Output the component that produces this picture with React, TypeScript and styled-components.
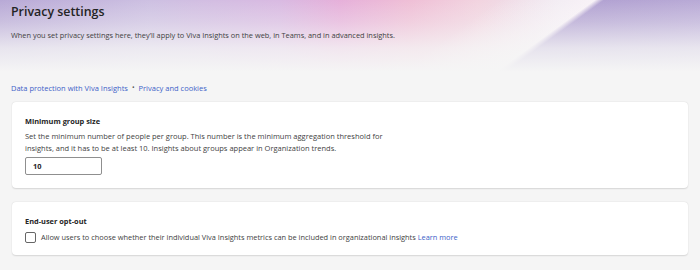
import React from "react";
import styled, { createGlobalStyle } from "styled-components";

const GlobalStyle = createGlobalStyle`
  html, body {
    margin: 0;
    padding: 0;
    background: #f5f5f5;
  }
  body {
    font-family: "Open Sans", "Noto Sans", Arial, sans-serif;
    color: #242424;
    -webkit-font-smoothing: antialiased;
  }
  * { box-sizing: border-box; }
`;

const Page = styled.div`
  width: 700px;
  height: 270px;
  overflow: hidden;
  background: #f5f5f5;
`;

const Hero = styled.header`
  height: 96px;
  padding: 2px 11px 0;
  display: flex;
  flex-direction: column;
  background:
    linear-gradient(180deg, rgba(245,245,245,0) 0px, rgba(245,245,245,0.3) 22px, rgba(245,245,245,0.78) 48px, #f5f5f5 72px),
    linear-gradient(144deg, rgba(255,255,255,0) 0%, rgba(250,244,248,0) 60%, rgba(250,244,248,0.85) 71.5%, #b2a2d2 72.6%, #c2b4dc 100%),
    linear-gradient(90deg, #b8a9d6 0px, #cdc0e2 150px, #d9bae2 280px, #e6b0da 340px, #efbfd6 410px, #f2d4e0 480px, #ece6ef 560px);
`;

const Title = styled.h1`
  margin: 0;
  font-size: 12.4px;
  line-height: 20px;
  font-weight: 600;
  color: #242424;
`;

const Subtitle = styled.p`
  margin: 8px 0 0;
  font-size: 7.4px;
  line-height: 10px;
  color: #424242;
`;

const LinkRow = styled.nav`
  margin-top: auto;
  margin-bottom: 3px;
  display: flex;
  align-items: center;
  gap: 4px;
  font-size: 7.5px;
  line-height: 10px;
`;

const Link = styled.a`
  color: #3d62c8;
  text-decoration: none;
`;

const Dot = styled.span`
  color: #5a5a5a;
  font-size: 7px;
`;

const Cards = styled.main`
  padding: 6px 12px 0;
  display: flex;
  flex-direction: column;
  gap: 14px;
`;

const Card = styled.section<{ $pad: string }>`
  background: #ffffff;
  border-radius: 4px;
  box-shadow: 0 0.5px 1.5px rgba(0, 0, 0, 0.13), 0 0 1px rgba(0,0,0,0.05);
  padding: ${(p) => p.$pad};
  display: flex;
  flex-direction: column;
`;

const CardTitle = styled.h2`
  margin: 0;
  font-size: 7.4px;
  line-height: 10px;
  font-weight: 700;
  color: #242424;
`;

const Desc = styled.p`
  margin: 5px 0 0;
  font-size: 7.5px;
  line-height: 11.5px;
  color: #424242;
  max-width: 362px;
`;

const NumberInput = styled.div`
  margin-top: 3px;
  width: 77px;
  height: 18px;
  border: 1px solid #8f8f8f;
  border-radius: 2px;
  padding: 0 7px;
  display: flex;
  align-items: center;
  font-size: 7.4px;
  font-weight: 700;
  color: #242424;
`;

const CheckRow = styled.label`
  margin-top: 5px;
  display: flex;
  align-items: center;
  gap: 5px;
  font-size: 7.4px;
  line-height: 12px;
  color: #424242;
`;

const Box = styled.span`
  width: 11px;
  height: 11px;
  border: 1px solid #666666;
  border-radius: 2px;
  flex: none;
`;

export default function App() {
  return (
    <Page>
      <GlobalStyle />
      <Hero>
        <Title>Privacy settings</Title>
        <Subtitle>
          When you set privacy settings here, they’ll apply to Viva Insights on the web, in Teams, and in advanced insights.
        </Subtitle>
        <LinkRow>
          <Link href="#">Data protection with Viva Insights</Link>
          <Dot>•</Dot>
          <Link href="#">Privacy and cookies</Link>
        </LinkRow>
      </Hero>
      <Cards>
        <Card $pad="14px 13px 13px">
          <CardTitle>Minimum group size</CardTitle>
          <Desc>
            Set the minimum number of people per group. This number is the minimum aggregation threshold for insights, and it has to be at least 10. Insights about groups appear in Organization trends.
          </Desc>
          <NumberInput>10</NumberInput>
        </Card>
        <Card $pad="14px 13px 12px">
          <CardTitle>End-user opt-out</CardTitle>
          <CheckRow>
            <Box />
            <span>
              Allow users to choose whether their individual Viva Insights metrics can be included in organizational insights{" "}
              <Link href="#">Learn more</Link>
            </span>
          </CheckRow>
        </Card>
      </Cards>
    </Page>
  );
}
